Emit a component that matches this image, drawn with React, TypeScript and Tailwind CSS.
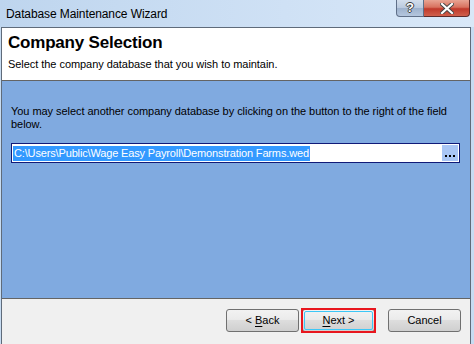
import React from "react";

const ui = { fontFamily: '"Liberation Sans", Arial, sans-serif' };

function WinButton({
  label,
  accel,
  rest,
  highlighted,
}: {
  label?: string;
  accel?: string;
  rest?: string;
  highlighted?: boolean;
}) {
  return (
    <div
      className="relative flex h-[23px] w-[73px] items-center justify-center rounded-[3px] border border-[#707070] text-[11px] text-black"
      style={{ background: "linear-gradient(#f2f2f2 0%, #ebebeb 45%, #dddddd 50%, #cfcfcf 100%)" }}
    >
      {highlighted && (
        <>
          <div className="pointer-events-none absolute inset-[1px] rounded-[2px] border border-[#3cc7f7]" />
          {/* red marker drawn over the default button */}
          <div className="pointer-events-none absolute -inset-[2px] border-2 border-[#e8161e]" />
        </>
      )}
      <span className="relative">
        {label}
        {accel && <span className="underline underline-offset-2">{accel}</span>}
        {rest}
      </span>
    </div>
  );
}

export default function App() {
  return (
    <div className="relative h-[344px] w-[474px] overflow-hidden bg-[#c7dcf2]" style={ui}>
      {/* title bar */}
      <div
        className="flex h-[27px] items-start justify-between"
        style={{ background: "linear-gradient(90deg, #bed5ee 0%, #cfe1f5 60%, #d9e8f8 100%)" }}
      >
        <div className="pl-[6px] pt-[5px] text-[12px] tracking-[-0.1px] text-black">Database Maintenance Wizard</div>
        <div className="mr-[4px] flex h-[17px]">
          <div
            className="flex w-[28px] items-center justify-center rounded-bl-[4px] border border-t-0 border-[#5f6f88] text-[13px] font-bold text-white"
            style={{
              background: "linear-gradient(#d3deec 0%, #b9c9de 50%, #9db1cc 51%, #b4c6de 100%)",
              textShadow: "1px 0 0 #3a3a3a, -1px 0 0 #3a3a3a, 0 1px 0 #3a3a3a, 0 -1px 0 #3a3a3a",
            }}
          >
            ?
          </div>
          <div
            className="flex w-[46px] items-center justify-center rounded-br-[4px] border border-l-0 border-t-0 border-[#5d2a2a]"
            style={{ background: "linear-gradient(#e8a493 0%, #d8725f 45%, #c0392b 55%, #d0604c 100%)" }}
          >
            <svg width="14" height="11" viewBox="0 0 14 11">
              <path d="M2 1 L12 10 M12 1 L2 10" stroke="#444" strokeWidth="4" strokeLinecap="square" />
              <path d="M2 1 L12 10 M12 1 L2 10" stroke="#fff" strokeWidth="2.2" strokeLinecap="square" />
            </svg>
          </div>
        </div>
      </div>

      {/* client area */}
      <div className="ml-[1px] mr-[3px] flex h-[317px] flex-col border-x border-t border-[#5f6b7a]">
        {/* header */}
        <div className="h-[53px] border-b border-[#646464] bg-white pl-[6px]">
          <div className="pt-[5px] text-[17px] font-bold leading-[20px] tracking-[-0.2px] text-black">
            Company Selection
          </div>
          <div className="pt-[5px] text-[11px] leading-[13px] tracking-[-0.05px] text-black">
            Select the company database that you wish to maintain.
          </div>
        </div>

        {/* body */}
        <div className="flex-1 border-b border-[#646464] bg-[#80aae0] pl-[9px] pr-[10px] pt-[24px]">
          <p className="text-[11px] leading-[13px] tracking-[-0.05px] text-black">
            You may select another company database by clicking on the button to the right of the field below.
          </p>
          <div className="mt-[12px] flex h-[20px] w-[449px] items-center border border-[#101a78] bg-white pl-[1px] pr-[1px]">
            <span className="bg-[#3399ff] px-[1px] text-[11px] leading-[15px] tracking-[-0.15px] text-white">
              C:\Users\Public\Wage Easy Payroll\Demonstration Farms.wed
            </span>
            <div className="ml-auto flex h-[16px] w-[16px] items-end justify-center bg-[#a9c6f5] pb-[4px]">
              <div className="flex gap-[2px]">
                <span className="h-[2px] w-[2px] bg-black" />
                <span className="h-[2px] w-[2px] bg-black" />
                <span className="h-[2px] w-[2px] bg-black" />
              </div>
            </div>
          </div>
        </div>

        {/* footer */}
        <div className="flex h-[45px] items-start justify-end bg-[#f0f0f0] pr-[9px] pt-[10px]">
          <WinButton label="< " accel="B" rest="ack" />
          <div className="ml-[3px]">
            <WinButton accel="N" rest="ext >" highlighted />
          </div>
          <div className="ml-[13px]">
            <WinButton label="Cancel" />
          </div>
        </div>
      </div>
    </div>
  );
}
